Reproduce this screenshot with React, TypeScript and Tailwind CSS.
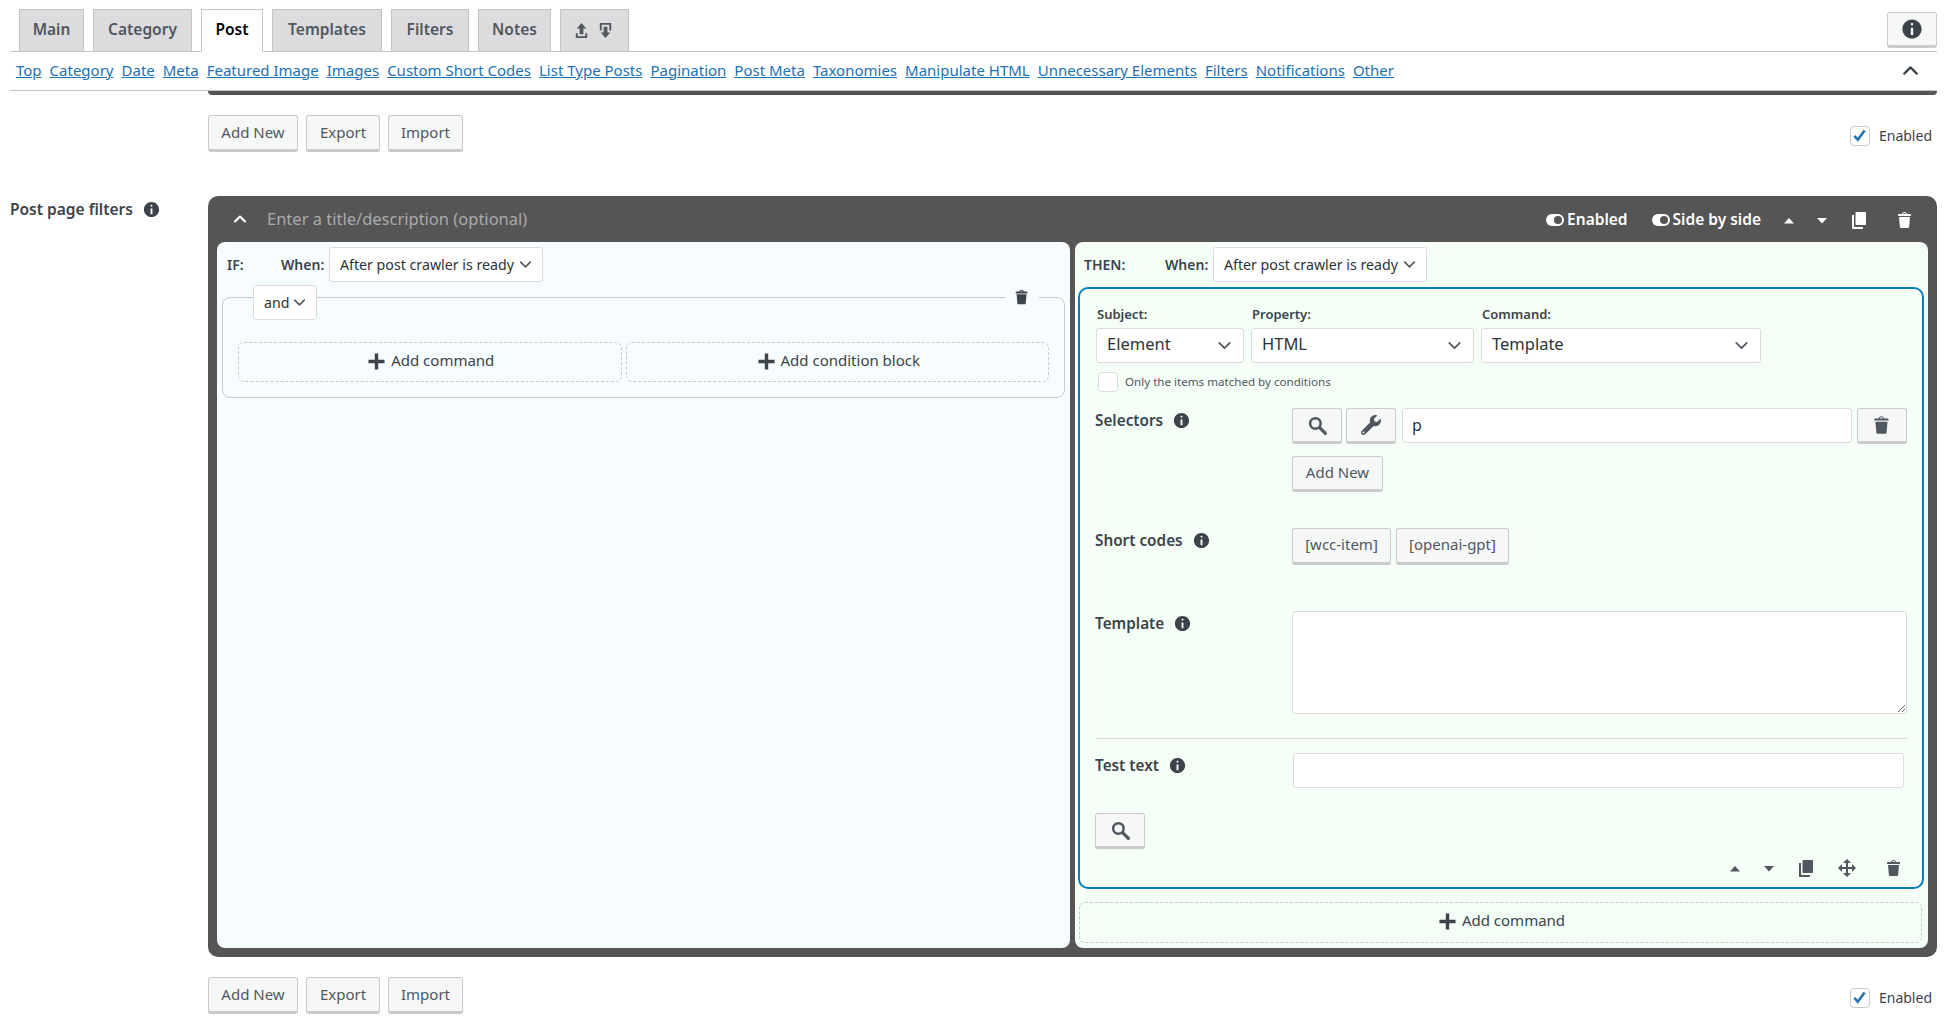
import { ChevronDown, ChevronUp } from "lucide-react"
import { FaWrench } from "react-icons/fa"

const font = "font-['Noto_Sans',sans-serif]"

const tabs = [
  { name: "Main", w: "w-[65px]" },
  { name: "Category", w: "w-[99px]" },
  { name: "Post", w: "w-[62px]", active: true },
  { name: "Templates", w: "w-[110px]" },
  { name: "Filters", w: "w-[78px]" },
  { name: "Notes", w: "w-[73px]" },
]

const links = [
  "Top",
  "Category",
  "Date",
  "Meta",
  "Featured Image",
  "Images",
  "Custom Short Codes",
  "List Type Posts",
  "Pagination",
  "Post Meta",
  "Taxonomies",
  "Manipulate HTML",
  "Unnecessary Elements",
  "Filters",
  "Notifications",
  "Other",
]

function Dash({ d, className }: { d: string; className?: string }) {
  return (
    <svg viewBox="0 0 20 20" fill="currentColor" className={className}>
      <path d={d} />
    </svg>
  )
}

const paths = {
  info: "M10 2c4.42 0 8 3.58 8 8s-3.58 8-8 8-8-3.58-8-8 3.58-8 8-8zm1 4c0-.55-.45-1-1-1s-1 .45-1 1 .45 1 1 1 1-.45 1-1zm0 9V9H9v6h2z",
  trash: "M12 4h3c.6 0 1 .4 1 1v1H3V5c0-.6.5-1 1-1h3c.2-1.1 1.3-2 2.5-2s2.3.9 2.5 2zM8 4h3c-.2-.6-.9-1-1.5-1S8.2 3.4 8 4zM4 7h11l-.9 10.1c0 .5-.5.9-1 .9H5.9c-.5 0-.9-.4-1-.9L4 7z",
  plus: "M17 8.500v3h-5.500V17h-3v-5.500H3v-3h5.500V3h3v5.500H17z",
  up: "M5 13.500L10 8l5 5.500z",
  down: "M5 8L10 13.500 15 8z",
  copy: "M7.500 2H16c.6 0 1 .4 1 1v11c0 .6-.4 1-1 1H7.500c-.6 0-1-.4-1-1V3c0-.6.4-1 1-1zM3 5h2v11c0 .5.4 1 1 1h8v1c0 .6-.4 1-1 1H4c-.6 0-1-.4-1-1V5z",
  move: "M19 10l-4 4v-3h-4v4h3l-4 4-4-4h3v-4H5v3l-4-4 4-4v3h4V5H6l4-4 4 4h-3v4h4V6z",
  upload: "M8 14V8H5l5-6 5 6h-3v6H8zm-2 2v-3H4v4c0 .6.4 1 1 1h10c.6 0 1-.4 1-1v-4h-2v3H6z",
  download: "M14.010 4v6h2V2H4v8h2.010V4h8zm-2 2v6h3l-5 6-5-6h3V6h4z",
}

function SearchIcon({ className }: { className?: string }) {
  return (
    <svg viewBox="0 0 20 20" fill="none" stroke="currentColor" className={className}>
      <circle cx="8" cy="8" r="5" strokeWidth="2.4" />
      <path d="M12 12l5.500 5.500" strokeWidth="3" strokeLinecap="round" />
    </svg>
  )
}

function Toggle() {
  return (
    <svg viewBox="0 0 18 12" className="w-[18px] h-[12px] shrink-0">
      <rect x="0" y="0" width="18" height="12" rx="6" fill="#fff" />
      <circle cx="12" cy="6" r="4" fill="#555" />
    </svg>
  )
}

function Info({ className }: { className?: string }) {
  return <Dash d={paths.info} className={className ?? "w-[19px] h-[19px] text-[#3c434a]"} />
}

function Btn({ w, h = "h-[37px]", children }: { w: string; h?: string; children: React.ReactNode }) {
  return (
    <button className={`${w} ${h} shrink-0 flex items-center justify-center bg-[#f6f7f7] border border-[#c8cacc] border-b-[3px] rounded-[3px] text-[15px] text-[#50575e]`}>
      {children}
    </button>
  )
}

function Select({ label, w, big }: { label: string; w: string; big?: boolean }) {
  return (
    <div className={`${w} h-[35px] shrink-0 flex items-center justify-between bg-white border border-[#dcdcde] rounded-[3px] font-normal ${big ? "pl-[10px] pr-[8px] text-[16.5px]" : "pl-[10px] pr-[7px] text-[14.2px]"} text-[#2c3338]`}>
      <span className={`whitespace-nowrap ${big ? "pb-[2px]" : ""}`}>{label}</span>
      <ChevronDown className={`${big ? "w-[21px] h-[21px]" : "w-[19px] h-[19px]"} text-[#50575e] shrink-0`} strokeWidth={2} />
    </div>
  )
}

function Dashed({ className, children }: { className: string; children: React.ReactNode }) {
  return (
    <div className={`${className} flex items-center justify-center gap-[2px] border border-dashed border-[#c8cacc] rounded-[6px] text-[15px] text-[#3c434a] pb-[2px]`}>
      <Dash d={paths.plus} className="w-[23px] h-[23px] text-[#3c434a]" />
      <span className="pb-[2px] ml-px">{children}</span>
    </div>
  )
}

function Actions() {
  return (
    <div className="ml-[198px] flex items-center">
      <div className="flex gap-[8px]">
        <Btn w="w-[90px]">Add New</Btn>
        <Btn w="w-[74px]">Export</Btn>
        <Btn w="w-[75px]">Import</Btn>
      </div>
      <label className="ml-auto mr-[5px] mt-[4px] flex items-center gap-[9px] text-[14px] text-[#3c434a]">
        <span className="w-[20px] h-[20px] flex items-center justify-center bg-white border border-[#c8cacc] rounded-[4px]">
          <svg viewBox="0 0 20 20" className="w-[17px] h-[17px]" fill="none" stroke="#2271b1" strokeWidth="3">
            <path d="M4 10.500l4 4.500 8-11" />
          </svg>
        </span>
        Enabled
      </label>
    </div>
  )
}

function FieldLabel({ text }: { text: string }) {
  return (
    <div className="w-[197px] shrink-0 flex items-center h-[24px] text-[15.300px] font-semibold text-[#3c434a]">
      <span>{text}</span>
      <Info className="ml-[9px] w-[19px] h-[19px] text-[#3c434a]" />
    </div>
  )
}

export default function App() {
  return (
    <div className={`${font} w-[1947px] h-[1034px] overflow-hidden bg-white`}>
      <div className="mx-[10px]">
        {/* tab bar */}
        <div className="h-[52px] flex items-end pl-[9px] gap-[9px] border-b border-[#c3c4c7]">
          {tabs.map((t) => (
            <div
              key={t.name}
              className={`${t.w} h-[43px] -mb-px flex items-center justify-center border border-[#c3c4c7] text-[15.5px] font-semibold pb-[2px] ${t.active ? "bg-white border-b-white text-black" : "bg-[#dcdcde] text-[#50575e]"}`}
            >
              {t.name}
            </div>
          ))}
          <div className="w-[69px] h-[43px] -mb-px flex items-center justify-center gap-[5px] pr-[2px] bg-[#dcdcde] border border-[#c3c4c7] text-[#50575e]">
            <Dash d={paths.upload} className="w-[19px] h-[19px]" />
            <Dash d={paths.download} className="w-[19px] h-[19px]" />
          </div>
          <button className="ml-auto self-start mt-[12px] w-[50px] h-[36px] flex items-center justify-center bg-[#f6f7f7] border border-[#c8cacc] border-b-[3px] rounded-[3px]">
            <Info className="w-[24px] h-[24px] text-[#3c434a]" />
          </button>
        </div>

        {/* section links */}
        <div className="h-[39px] flex items-center pl-[6px] pr-[14px] pb-[2px] gap-[8px] border-b border-[#c3c4c7] text-[15px] text-[#2271b1]">
          {links.map((l, i) => (
            <a key={i} className="underline whitespace-nowrap">
              {l}
            </a>
          ))}
          <ChevronUp className="ml-auto w-[25px] h-[25px] text-[#3c434a]" strokeWidth={2.2} />
        </div>

        <div className="ml-[198px] h-[4px] bg-[#555] rounded-b-[6px]" />

        <div className="mt-[20px]">
          <Actions />
        </div>

        {/* filter row */}
        <div className="mt-[44px] flex">
          <div className="w-[198px] shrink-0 flex items-center h-[26px] pt-px text-[15.5px] font-semibold text-[#3c434a]">
            <span>Post page filters</span>
            <Info className="ml-[9px] w-[19px] h-[19px] text-[#3c434a]" />
          </div>

          <div className="w-[1729px] h-[761px] bg-[#555] rounded-[10px] flex flex-col">
            {/* dark header */}
            <div className="h-[46px] flex items-center pl-[22px] pr-[22px] text-white">
              <ChevronUp className="w-[20px] h-[20px] text-white" strokeWidth={2.5} />
              <input
                placeholder="Enter a title/description (optional)"
                className="ml-[17px] w-[500px] bg-transparent outline-none text-[16.500px] placeholder:text-[#aaaaaa]"
              />
              <div className="ml-auto flex items-center pt-px text-[15.500px] font-semibold">
                <Toggle />
                <span className="ml-[3px]">Enabled</span>
                <span className="ml-[24px]">
                  <Toggle />
                </span>
                <span className="ml-[3px]">Side by side</span>
                <Dash d={paths.up} className="ml-[18px] w-[20px] h-[20px]" />
                <Dash d={paths.down} className="ml-[13px] w-[20px] h-[20px]" />
                <Dash d={paths.copy} className="ml-[17px] w-[20px] h-[20px]" />
                <Dash d={paths.trash} className="ml-[26px] w-[20px] h-[20px]" />
              </div>
            </div>

            <div className="flex-1 flex gap-[5px] pl-[9px] pr-[8px] pb-[9px]">
              {/* IF */}
              <div className="w-[853px] bg-[#f7fcfe] rounded-[8px] pt-[5px]">
                <div className="flex items-center pl-[10px] text-[14px] font-semibold text-[#3c434a]">
                  <span className="w-[54px]">IF:</span>
                  <span className="w-[48px]">When:</span>
                  <Select label="After post crawler is ready" w="w-[214px]" />
                </div>
                <div className="relative ml-[5px] mr-[5px] mt-[15px] border border-[#c8cacc] rounded-[8px] pt-[44px] pb-[15px] px-[15px] flex gap-[4px]">
                  <div className="absolute -top-[13px] left-[30px]">
                    <Select label="and" w="w-[64px]" />
                  </div>
                  <div className="absolute -top-[10px] right-[25px] px-[8px] bg-[#f7fcfe]">
                    <Dash d={paths.trash} className="w-[18px] h-[18px] text-[#3c434a]" />
                  </div>
                  <Dashed className="w-[384px] h-[40px]">Add command</Dashed>
                  <Dashed className="w-[424px] h-[40px]">Add condition block</Dashed>
                </div>
              </div>

              {/* THEN */}
              <div className="w-[853px] bg-[#f5fff7] rounded-[8px] pt-[5px]">
                <div className="flex items-center pl-[9px] text-[14px] font-semibold text-[#3c434a]">
                  <span className="w-[81px]">THEN:</span>
                  <span className="w-[48px]">When:</span>
                  <Select label="After post crawler is ready" w="w-[214px]" />
                </div>

                <div className="ml-[3px] mr-[4px] mt-[5px] h-[602px] border-2 border-[#0a7cba] rounded-[10px] pl-[15px] pt-[17px]">
                  <div className="flex gap-[7px] pl-px text-[13px] font-semibold text-[#3c434a]">
                    <div className="flex flex-col gap-[6px]">
                      <span className="h-[16px] leading-[16px] pl-px">Subject:</span>
                      <Select label="Element" w="w-[148px]" big />
                    </div>
                    <div className="flex flex-col gap-[6px]">
                      <span className="h-[16px] leading-[16px] pl-px">Property:</span>
                      <Select label="HTML" w="w-[223px]" big />
                    </div>
                    <div className="flex flex-col gap-[6px]">
                      <span className="h-[16px] leading-[16px] pl-px">Command:</span>
                      <Select label="Template" w="w-[280px]" big />
                    </div>
                  </div>

                  <div className="mt-[9px] h-[20px] flex items-center pl-[3px] gap-[7px] text-[11.600px] text-[#50575e]">
                    <span className="w-[20px] h-[20px] bg-white border border-[#dcdcde] rounded-[4px]" />
                    Only the items matched by conditions
                  </div>

                  <div className="mt-[16px] flex">
                    <FieldLabel text="Selectors" />
                    <div>
                      <div className="flex gap-[4px]">
                        <Btn w="w-[50px]" h="h-[36px]">
                          <SearchIcon className="w-[21px] h-[21px] text-[#50575e]" />
                        </Btn>
                        <Btn w="w-[50px]" h="h-[36px]">
                          <FaWrench className="w-[20px] h-[20px] text-[#50575e]" />
                        </Btn>
                        <input
                          defaultValue="p"
                          className="ml-[2px] mr-px w-[450px] h-[35px] px-[9px] pb-[2px] bg-white border border-[#dcdcde] rounded-[3px] text-[16px] text-[#2c3338] outline-none"
                        />
                        <Btn w="w-[50px]" h="h-[36px]">
                          <Dash d={paths.trash} className="w-[22px] h-[22px] text-[#50575e]" />
                        </Btn>
                      </div>
                      <div className="mt-[12px]">
                        <Btn w="w-[91px]" h="h-[36px]">
                          <span className="pb-[2px]">Add New</span>
                        </Btn>
                      </div>
                    </div>
                  </div>

                  <div className="mt-[36px] flex">
                    <FieldLabel text="Short codes" />
                    <div className="flex gap-[5px]">
                      <Btn w="w-[99px]">
                        <span className="pb-[2px]">[wcc-item]</span>
                      </Btn>
                      <Btn w="w-[113px]">
                        <span className="pb-[2px]">[openai-gpt]</span>
                      </Btn>
                    </div>
                  </div>

                  <div className="mt-[46px] flex">
                    <FieldLabel text="Template" />
                    <textarea className="block w-[615px] h-[103px] bg-white border border-[#dcdcde] rounded-[3px] outline-none" />
                  </div>

                  <div className="mt-[24px] mr-[14px] h-px bg-[#dcdcde]" />

                  <div className="mt-[14px] flex">
                    <FieldLabel text="Test text" />
                    <input className="ml-px w-[611px] h-[35px] bg-white border border-[#dcdcde] rounded-[3px] outline-none" />
                  </div>

                  <div className="mt-[25px]">
                    <Btn w="w-[50px]" h="h-[36px]">
                      <SearchIcon className="w-[21px] h-[21px] text-[#50575e]" />
                    </Btn>
                  </div>

                  <div className="mt-[9px] pr-[18px] flex justify-end text-[#50575e]">
                    <Dash d={paths.up} className="w-[20px] h-[20px]" />
                    <Dash d={paths.down} className="ml-[14px] w-[20px] h-[20px]" />
                    <Dash d={paths.copy} className="ml-[17px] w-[20px] h-[20px]" />
                    <Dash d={paths.move} className="ml-[21px] w-[20px] h-[20px]" />
                    <Dash d={paths.trash} className="ml-[27px] w-[20px] h-[20px]" />
                  </div>
                </div>

                <Dashed className="ml-[4px] mr-[6px] mt-[13px] h-[41px]">Add command</Dashed>
              </div>
            </div>
          </div>
        </div>

        <div className="mt-[20px]">
          <Actions />
        </div>
      </div>
    </div>
  )
}
